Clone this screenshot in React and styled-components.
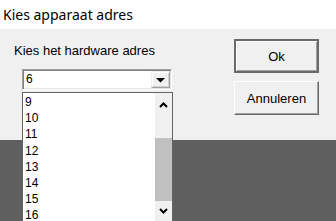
import React from "react";
import styled, { createGlobalStyle } from "styled-components";

const GlobalStyle = createGlobalStyle`
  html, body {
    margin: 0;
    padding: 0;
    background: #5f5f5f;
  }
  * {
    box-sizing: border-box;
  }
`;

const Screen = styled.div`
  position: relative;
  width: 336px;
  height: 221px;
  overflow: hidden;
  background: #5f5f5f;
  font-family: "Liberation Sans", Arial, sans-serif;
  color: #000;
`;

const TitleBar = styled.div`
  height: 29px;
  background: #fff;
  padding: 6px 0 0 3px;
  font-family: "Noto Sans", "Open Sans", sans-serif;
  font-size: 14px;
  line-height: 17px;
`;

const Body = styled.div`
  height: 111px;
  background: #f0f0f0;
  display: flex;
  justify-content: space-between;
  padding: 0 17px 0 14px;
`;

const LeftColumn = styled.div`
  display: flex;
  flex-direction: column;
  padding-top: 14px;
`;

const Label = styled.div`
  font-size: 13px;
  line-height: 15px;
  height: 26px;
`;

const Combo = styled.div`
  margin-left: 8px;
  width: 150px;
  height: 21px;
  display: flex;
  align-items: stretch;
  background: #fff;
  border: 1px solid;
  border-color: #a0a0a0 #ffffff #ffffff #a0a0a0;
  box-shadow: inset 1px 1px #808080, inset -1px -1px #e3e3e3;
  padding: 2px 1px 1px 2px;
`;

const ComboValue = styled.div`
  flex: 1;
  font-size: 12px;
  line-height: 15px;
  padding-left: 1px;
`;

const ComboButton = styled.div`
  width: 19px;
  margin-top: -1px;
  background: #f0f0f0;
  border: 1px solid;
  border-color: #f0f0f0 #a0a0a0 #a0a0a0 #f0f0f0;
  box-shadow: inset 1px 1px #fff, inset -1px -1px #d0d0d0;
  display: flex;
  align-items: center;
  justify-content: center;
  padding-top: 2px;
`;

const ButtonColumn = styled.div`
  display: flex;
  flex-direction: column;
  gap: 8px;
  padding-top: 10px;
`;

const DialogButton = styled.div`
  width: 85px;
  height: 34px;
  display: flex;
  align-items: center;
  justify-content: center;
  font-size: 13px;
  background: #f0f0f0;
  border: ${(p) => (p.$default ? "2px solid" : "1px solid")};
  border-color: ${(p) =>
    p.$default ? "#6a6a6a" : "#ffffff #696969 #696969 #ffffff"};
  box-shadow: ${(p) =>
    p.$default
      ? "inset 1px 1px #fff, inset -1px -1px #a0a0a0"
      : "inset -1px -1px #a0a0a0"};
`;

const DropList = styled.div`
  position: absolute;
  left: 22px;
  top: 92px;
  width: 151px;
  height: 140px;
  background: #fff;
  border: 1px solid #646464;
  display: flex;
`;

const Items = styled.div`
  flex: 1;
  padding-top: 1px;
`;

const Item = styled.div`
  height: 16.2px;
  font-size: 12px;
  line-height: 16px;
  padding-left: 2px;
`;

const ScrollBar = styled.div`
  width: 17px;
  background: #f0f0f0;
  display: flex;
  flex-direction: column;
`;

const ArrowCell = styled.div`
  height: ${(p) => p.$h}px;
  display: flex;
  align-items: center;
  justify-content: center;
`;

const Track = styled.div`
  height: ${(p) => p.$h}px;
  background: ${(p) => (p.$thumb ? "#c0c0c0" : "#f0f0f0")};
`;

const Chevron = ({ up }) => (
  <svg width="9" height="6" viewBox="0 0 9 6">
    <polyline
      points={up ? "1,5 4.5,1.5 8,5" : "1,1 4.5,4.5 8,1"}
      fill="none"
      stroke="#000"
      strokeWidth="2"
    />
  </svg>
);

const items = ["9", "10", "11", "12", "13", "14", "15", "16"];

export default function App() {
  return (
    <>
      <GlobalStyle />
      <Screen>
        <TitleBar>Kies apparaat adres</TitleBar>
        <Body>
          <LeftColumn>
            <Label>Kies het hardware adres</Label>
            <Combo>
              <ComboValue>6</ComboValue>
              <ComboButton>
                <svg width="9" height="5" viewBox="0 0 9 5">
                  <polygon points="0,0 9,0 4.5,4.5" fill="#000" />
                </svg>
              </ComboButton>
            </Combo>
          </LeftColumn>
          <ButtonColumn>
            <DialogButton $default>Ok</DialogButton>
            <DialogButton>Annuleren</DialogButton>
          </ButtonColumn>
        </Body>
        <DropList>
          <Items>
            {items.map((n) => (
              <Item key={n}>{n}</Item>
            ))}
          </Items>
          <ScrollBar>
            <ArrowCell $h={23}>
              <Chevron up />
            </ArrowCell>
            <Track $h={22} />
            <Track $thumb $h={63} />
            <ArrowCell $h={20}>
              <Chevron />
            </ArrowCell>
          </ScrollBar>
        </DropList>
      </Screen>
    </>
  );
}
